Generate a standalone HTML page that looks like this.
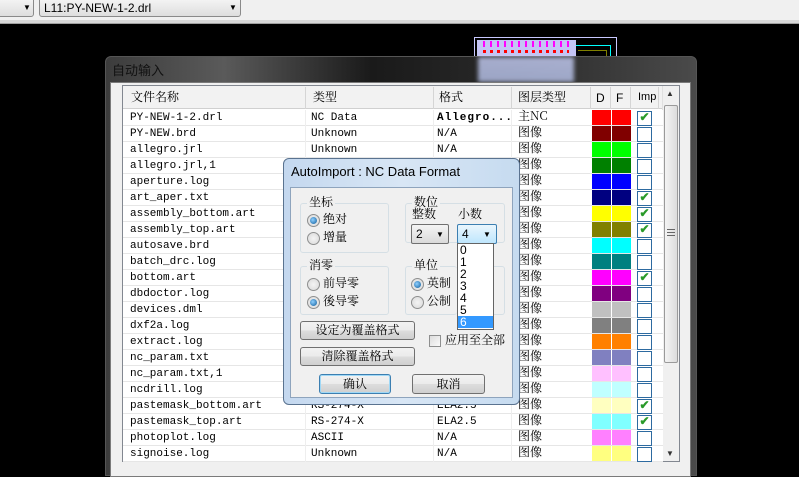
<!DOCTYPE html>
<html><head><meta charset="utf-8"><style>
*{margin:0;padding:0;box-sizing:border-box}
body{width:799px;height:471px;overflow:hidden;background:#000;position:relative;font-family:"Liberation Sans","Noto Sans CJK SC",sans-serif;font-size:12px;color:#000}
.a{position:absolute}
.mono{font-family:"Liberation Mono","Noto Sans CJK SC",monospace;font-size:11px}
.cj{font-family:"Noto Serif CJK SC","Noto Sans CJK SC",serif;font-size:12px;line-height:14px}
.row{position:absolute;left:123px;width:540px;height:16px;border-bottom:1px solid #e6e6e6;background:#fff}
.row span{position:absolute;top:1px;white-space:nowrap;line-height:14px}
.sw{position:absolute;top:0;height:15px;width:19px}
.cb{position:absolute;left:637px;top:1px;width:15px;height:15px;border:1px solid #2d6aa0;background:#fff;color:#2a9a2a;font-size:12px;line-height:12px;text-align:center;font-weight:bold}
.grp{position:absolute;border:1px solid #d5dfe5;border-radius:3px}
.gl{position:absolute;background:#f0f0f0;padding:0 2px;top:-9px;left:6px;line-height:14px}
.rad{position:absolute;width:13px;height:13px;border-radius:50%;border:1px solid #8e8f8f;background:radial-gradient(circle,#f4f4f4,#d8d8d8)}
.rad.on::after{content:"";position:absolute;left:2px;top:2px;width:7px;height:7px;border-radius:50%;background:radial-gradient(circle at 40% 40%,#8fd0ff,#0d5b9a)}
.btn{position:absolute;border:1px solid #707070;border-radius:3px;background:linear-gradient(#f2f2f2,#ebebeb 50%,#dddddd 51%,#cfcfcf);text-align:center;line-height:17px}
</style></head><body>
<div class="a" style="left:0;top:0;width:799px;height:22px;background:#f0f0f0"></div>
<div class="a" style="left:0;top:20px;width:799px;height:4px;background:#d8d8d8;border-bottom:1px solid #a0a0a0"></div>
<div class="a" style="left:-5px;top:-3px;width:39px;height:20px;border:1px solid #8a8a8a;border-radius:3px;background:linear-gradient(#f6f6f6,#dedede)"><span class="a" style="left:27px;top:5px;font-size:8px">▼</span></div>
<div class="a" style="left:39px;top:-3px;width:202px;height:20px;border:1px solid #8a8a8a;border-radius:3px;background:linear-gradient(#f6f6f6,#dedede)"><span class="a" style="left:4px;top:3px;font-size:12px">L11:PY-NEW-1-2.drl</span><span class="a" style="left:189px;top:5px;font-size:8px">▼</span></div>
<div class="a" style="left:474px;top:37px;width:143px;height:22px;border:1px solid #c8c8ff;border-bottom:none"></div>
<div class="a" style="left:477px;top:40px;width:99px;height:20px;background:#c4c4f4"></div>
<div class="a" style="left:483px;top:41px;width:86px;height:6px;background:repeating-linear-gradient(90deg,#ff00ff 0 2px,transparent 2px 7px)"></div>
<div class="a" style="left:483px;top:50px;width:86px;height:3px;background:repeating-linear-gradient(90deg,#f00 0 3px,transparent 3px 7px)"></div>
<div class="a" style="left:576px;top:45px;width:35px;height:14px;border-top:1px solid #0ff;border-right:1px solid #0ff"></div>
<div class="a" style="left:578px;top:50px;width:29px;height:10px;border-top:1px solid #808000;border-right:1px solid #808000"></div>
<div class="a" style="left:105px;top:56px;width:592px;height:420px;border-radius:6px 6px 0 0;border:1px solid #555;background:linear-gradient(90deg,#3c3c3c,#5a5a5a 20%,#1a1a1a 45%,#2a2a2a 70%,#4a4a4a)"></div>
<div class="a" style="left:478px;top:57px;width:96px;height:25px;background:linear-gradient(#c8d0f8,#b8c4ec);opacity:.8;filter:blur(2px)"></div>
<div class="a" style="left:112px;top:61px;color:#111;font-size:13px;font-family:'Noto Sans CJK SC',sans-serif;line-height:17px">自动输入</div>
<div class="a" style="left:110px;top:82px;width:581px;height:395px;background:#f0f0f0;border:1px solid #7a7a7a"></div>
<div class="a" style="left:122px;top:85px;width:558px;height:377px;border:1px solid #828790;background:#fff"></div>
<div class="a" style="left:123px;top:86px;width:540px;height:23px;background:#f2f2f2;border-bottom:1px solid #d0d0d0"></div>
<div class="a cj" style="left:131px;top:90px">文件名称</div>
<div class="a cj" style="left:313px;top:90px">类型</div>
<div class="a cj" style="left:439px;top:90px">格式</div>
<div class="a cj" style="left:518px;top:90px">图层类型</div>
<div class="a" style="left:596px;top:91px">D</div>
<div class="a" style="left:616px;top:91px">F</div>
<div class="a" style="left:638px;top:91px;font-size:11px">Imp</div>
<div class="a" style="left:305px;top:87px;width:1px;height:22px;background:#d5d5d5"></div>
<div class="a" style="left:433px;top:87px;width:1px;height:22px;background:#d5d5d5"></div>
<div class="a" style="left:511px;top:87px;width:1px;height:22px;background:#d5d5d5"></div>
<div class="a" style="left:590px;top:87px;width:1px;height:22px;background:#d5d5d5"></div>
<div class="a" style="left:610px;top:87px;width:1px;height:22px;background:#d5d5d5"></div>
<div class="a" style="left:630px;top:87px;width:1px;height:22px;background:#d5d5d5"></div>
<div class="a" style="left:658px;top:87px;width:1px;height:22px;background:#d5d5d5"></div>
<div class="a" style="left:662px;top:86px;width:17px;height:375px;background:#f0f0f0;border-left:1px solid #e0e0e0"></div>
<div class="a" style="left:666px;top:89px;font-size:8px;color:#333">▲</div>
<div class="a" style="left:664px;top:105px;width:14px;height:258px;border:1px solid #9a9a9a;border-radius:2px;background:linear-gradient(90deg,#f4f4f4,#dcdcdc)"></div>
<div class="a" style="left:667px;top:229px;width:8px;height:8px;background:repeating-linear-gradient(#666 0 1px,transparent 1px 3px)"></div>
<div class="a" style="left:666px;top:449px;font-size:8px;color:#333">▼</div>
<div id="rows"></div>
<script>
var d=[["PY-NEW-1-2.drl","NC Data","Allegro...","主NC","#ff0000",1],
["PY-NEW.brd","Unknown","N/A","图像","#800000",0],
["allegro.jrl","Unknown","N/A","图像","#00ff00",0],
["allegro.jrl,1","Unknown","N/A","图像","#008000",0],
["aperture.log","Unknown","N/A","图像","#0000ff",0],
["art_aper.txt","Unknown","N/A","图像","#000080",1],
["assembly_bottom.art","RS-274-X","ELA2.5","图像","#ffff00",1],
["assembly_top.art","RS-274-X","ELA2.5","图像","#808000",1],
["autosave.brd","Unknown","N/A","图像","#00ffff",0],
["batch_drc.log","Unknown","N/A","图像","#008080",0],
["bottom.art","RS-274-X","ELA2.5","图像","#ff00ff",1],
["dbdoctor.log","Unknown","N/A","图像","#800080",0],
["devices.dml","Unknown","N/A","图像","#c0c0c0",0],
["dxf2a.log","Unknown","N/A","图像","#808080",0],
["extract.log","Unknown","N/A","图像","#ff8000",0],
["nc_param.txt","Unknown","N/A","图像","#8080c0",0],
["nc_param.txt,1","Unknown","N/A","图像","#ffc0ff",0],
["ncdrill.log","Unknown","N/A","图像","#c0ffff",0],
["pastemask_bottom.art","RS-274-X","ELA2.5","图像","#ffffc0",1],
["pastemask_top.art","RS-274-X","ELA2.5","图像","#80ffff",1],
["photoplot.log","ASCII","N/A","图像","#ff80ff",0],
["signoise.log","Unknown","N/A","图像","#ffff80",0]];
var h="";
for(var i=0;i<d.length;i++){var r=d[i],t=110+i*16;
h+='<div class="row mono" style="top:'+t+'px"><span style="left:7px">'+r[0]+'</span><span style="left:188px">'+r[1]+'</span><span style="left:314px;'+(i==0?'font-weight:bold;letter-spacing:1px':'')+'">'+r[2]+'</span><span class="cj" style="left:395px;font-size:12px;line-height:14px;top:-1px">'+r[3]+'</span>'+
'<div style="position:absolute;left:182px;top:0;width:1px;height:16px;background:#eee"></div><div style="position:absolute;left:310px;top:0;width:1px;height:16px;background:#eee"></div><div style="position:absolute;left:388px;top:0;width:1px;height:16px;background:#eee"></div>'+
'<div class="sw" style="left:469px;background:'+r[4]+'"></div><div class="sw" style="left:489px;background:'+r[4]+'"></div>'+
'<div class="cb" style="left:514px">'+(r[5]?'✔':'')+'</div></div>';}
document.getElementById("rows").innerHTML=h;
</script>
<div class="a" style="left:283px;top:158px;width:237px;height:247px;border:1px solid #5a7390;border-radius:6px;background:linear-gradient(90deg,#c4d8ef,#d8e6f5 50%,#c6dbf0)"></div>
<div class="a" style="left:291px;top:164px;font-size:13px;color:#000">AutoImport : NC Data Format</div>
<div class="a" style="left:290px;top:187px;width:223px;height:211px;background:#f0f0f0;border:1px solid #8ea4bd"></div>
<div class="grp" style="left:300px;top:203px;width:89px;height:50px"><span class="gl cj">坐标</span></div>
<div class="rad on" style="left:307px;top:214px"></div><div class="a cj" style="left:323px;top:212px">绝对</div>
<div class="rad" style="left:307px;top:232px"></div><div class="a cj" style="left:323px;top:230px">增量</div>
<div class="grp" style="left:405px;top:203px;width:100px;height:40px"><span class="gl cj">数位</span></div>
<div class="a cj" style="left:412px;top:207px">整数</div><div class="a cj" style="left:458px;top:207px">小数</div>
<div class="a" style="left:411px;top:224px;width:38px;height:20px;border:1px solid #707070;border-radius:2px;background:linear-gradient(#f4f4f4,#dadada)"><span class="a" style="left:4px;top:2px;font-size:12px">2</span><span class="a" style="left:24px;top:5px;font-size:8px">▼</span></div>
<div class="a" style="left:457px;top:224px;width:40px;height:20px;border:1px solid #3c7fb1;border-radius:2px;background:linear-gradient(#eaf6fd,#bee6fd)"><span class="a" style="left:4px;top:2px;font-size:12px">4</span><span class="a" style="left:25px;top:5px;font-size:8px">▼</span></div>
<div class="a" style="left:457px;top:243px;width:37px;height:87px;border:1px solid #646464;background:#fff;font-size:12px;line-height:12px">
<div style="padding-left:2px">0</div><div style="padding-left:2px">1</div><div style="padding-left:2px">2</div><div style="padding-left:2px">3</div><div style="padding-left:2px">4</div><div style="padding-left:2px">5</div><div style="padding-left:2px;background:#3399ff;color:#fff">6</div></div>
<div class="grp" style="left:300px;top:266px;width:89px;height:49px"><span class="gl cj">消零</span></div>
<div class="rad" style="left:307px;top:278px"></div><div class="a cj" style="left:323px;top:276px">前导零</div>
<div class="rad on" style="left:307px;top:296px"></div><div class="a cj" style="left:323px;top:294px">後导零</div>
<div class="grp" style="left:405px;top:266px;width:52px;height:49px;border-right:none"><span class="gl cj">单位</span></div>
<div class="a" style="left:494px;top:266px;width:11px;height:49px;border:1px solid #d5dfe5;border-left:none;border-radius:0 3px 3px 0"></div>
<div class="rad on" style="left:411px;top:278px"></div><div class="a cj" style="left:427px;top:276px">英制</div>
<div class="rad" style="left:411px;top:296px"></div><div class="a cj" style="left:427px;top:294px">公制</div>
<div class="btn cj" style="left:300px;top:321px;width:115px;height:19px;line-height:16px">设定为覆盖格式</div>
<div class="btn cj" style="left:300px;top:347px;width:115px;height:19px;line-height:16px">清除覆盖格式</div>
<div class="a" style="left:429px;top:335px;width:12px;height:12px;border:1px solid #8e8f8f;background:linear-gradient(135deg,#ddd,#fafafa)"></div>
<div class="a cj" style="left:445px;top:333px">应用至全部</div>
<div class="btn cj" style="left:319px;top:374px;width:72px;height:20px;line-height:17px;border-color:#3c7fb1;box-shadow:inset 0 0 0 1px #9fd8f6">确认</div>
<div class="btn cj" style="left:412px;top:374px;width:73px;height:20px;line-height:17px">取消</div>
</body></html>
